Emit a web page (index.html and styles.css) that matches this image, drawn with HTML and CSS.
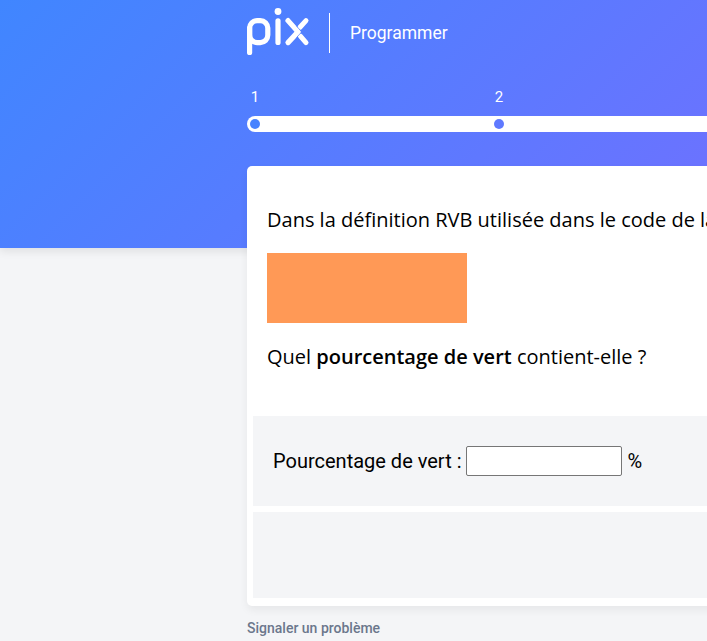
FILE: index.html
```html
<!DOCTYPE html>
<html lang="fr">
<head>
<meta charset="utf-8">
<title>Pix</title>
<link rel="stylesheet" href="styles.css">
</head>
<body>
<div class="page">
  <div class="banner"></div>
  <main class="content">
    <header class="header">
      <svg class="logo" width="62" height="50" viewBox="0 0 62 50" fill="none" stroke="#fff" stroke-width="5.2" stroke-linecap="round" role="img" aria-label="pix">
        <line x1="2.6" y1="20" x2="2.6" y2="44.4"/>
        <rect x="2.6" y="12.6" width="18.2" height="22" rx="7.5"/>
        <line x1="31" y1="12.8" x2="31" y2="34.4"/>
        <circle cx="31" cy="3.5" r="3.4" fill="#fff" stroke="none"/>
        <line x1="41" y1="12.6" x2="51" y2="23.9"/>
        <line x1="51" y1="23.9" x2="41" y2="34.6"/>
        <line x1="59" y1="12.6" x2="53" y2="19.2" stroke-width="5"/>
        <line x1="53.4" y1="28.2" x2="59" y2="34.6" stroke-width="5"/>
        <line x1="49.5" y1="18" x2="55.5" y2="24.9" stroke="#527fff" stroke-width=".7" stroke-linecap="butt"/>
        <line x1="49.5" y1="29.6" x2="55.5" y2="23.1" stroke="#527fff" stroke-width=".7" stroke-linecap="butt"/>
      </svg>
      <span class="divider"></span>
      <span class="title">Programmer</span>
    </header>
    <div class="progress">
      <div class="numbers"><span>1</span><span>2</span></div>
      <div class="bar"><i class="dot dot-first"></i><i class="dot"></i></div>
    </div>
    <section class="card">
      <div class="statement">
        <p>Dans la définition RVB utilisée dans le code de la</p>
        <div class="swatch"></div>
        <p>Quel <strong>pourcentage de vert</strong> contient-elle ?</p>
      </div>
      <label class="answer"><span>Pourcentage de vert :</span><input type="text"><span>%</span></label>
      <div class="actions"></div>
    </section>
    <a class="report">Signaler un problème</a>
  </main>
</div>
</body>
</html>
```
FILE: styles.css
```css
* { box-sizing: border-box; }
body {
  margin: 0;
  background: #f4f5f7;
  font-family: Roboto, sans-serif;
}
.page {
  display: grid;
  grid-template-columns: 1474px;
  width: 100%;
  height: 641px;
  overflow: hidden;
}
.banner, .content { grid-area: 1 / 1; }
.banner {
  height: 248px;
  background: linear-gradient(135deg, #4086ff, #9460ff);
  box-shadow: 0 4px 8px rgba(0, 0, 0, .08);
}
.content {
  width: 980px;
  margin-left: 247px;
  z-index: 1;
}
.header {
  display: flex;
  height: 66px;
  align-items: center;
  color: #fff;
}
.logo { margin-top: 0; overflow: visible; }
.divider {
  width: 1px;
  height: 40px;
  margin: 0 20px;
  background: #fff;
}
.title { font-size: 17.5px; }
.progress { height: 100px; padding-top: 20px; }
.numbers {
  display: flex;
  height: 30px;
  color: #fff;
  font-size: 15px;
  line-height: 22px;
}
.numbers span { width: 16px; margin-right: 228px; text-align: center; }
.bar {
  display: flex;
  align-items: center;
  gap: 234px;
  height: 16px;
  padding-left: 3px;
  border-radius: 8px;
  background: #fff;
}
.dot {
  width: 10px;
  height: 10px;
  border-radius: 50%;
  background: #5f79ff;
}
.dot-first { background: #4783ff; }
.card {
  height: 440px;
  padding: 0 6px 8px;
  border-radius: 5px;
  background: #fff;
  box-shadow: 0 4px 8px rgba(0, 0, 0, .06);
}
.statement {
  height: 250px;
  padding: 39px 14px 0;
  font-family: "Open Sans", sans-serif;
  font-size: 20px;
  line-height: 30px;
  white-space: nowrap;
}
.statement p { margin: 0; }
.statement strong { font-weight: 600; }
.swatch {
  width: 200px;
  height: 70px;
  margin: 18px 0 19px;
  background: #ff9956;
}
.answer {
  display: flex;
  align-items: center;
  height: 90px;
  padding-left: 20px;
  background: #f4f5f7;
  font-size: 20px;
}
.answer input {
  width: 156px;
  height: 30px;
  margin: 0 5px;
  padding: 1px 2px;
  border: 1px solid #767676;
  border-radius: 2px;
  background: #fff;
}
.actions {
  height: 86px;
  margin-top: 6px;
  background: #f4f5f7;
}
.report {
  display: block;
  margin-top: 14px;
  color: #6b778c;
  font-size: 14px;
  font-weight: 500;
  line-height: 16px;
}
```
